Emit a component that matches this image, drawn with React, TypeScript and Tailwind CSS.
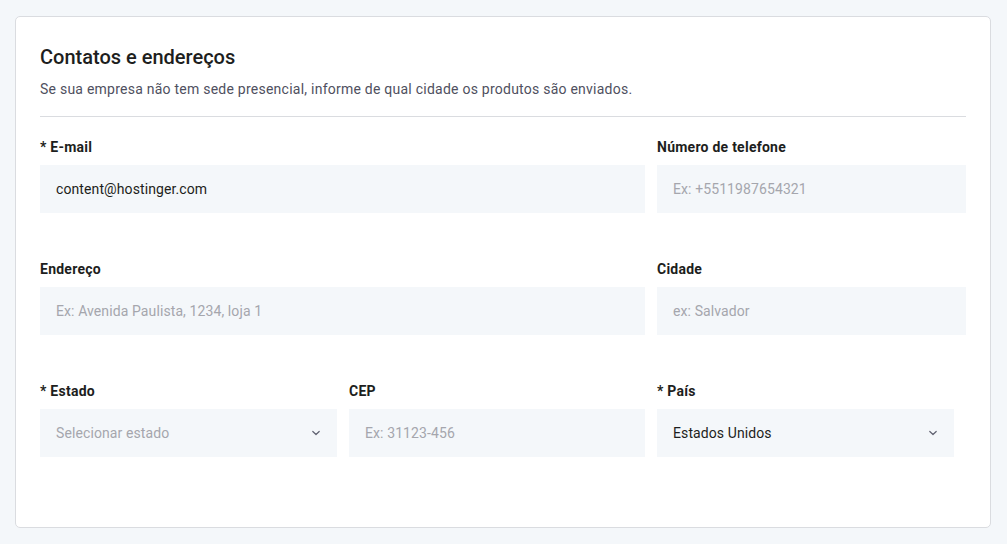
import React from "react";

function Chevron() {
  return (
    <svg width="10" height="10" viewBox="0 0 10 10" fill="none" className="shrink-0">
      <path d="M1.8 3.5 L5 6.5 L8.2 3.5" stroke="#5f6170" strokeWidth="1.2" strokeLinecap="round" strokeLinejoin="round" />
    </svg>
  );
}

function Field({
  label,
  value,
  placeholder,
  width,
  select,
}: {
  label: string;
  value?: string;
  placeholder?: string;
  width: string;
  select?: boolean;
}) {
  return (
    <div className={`flex flex-col ${width}`}>
      <div className="text-[14px] leading-5 font-bold text-[#1d1e20] tracking-[0.25px]">{label}</div>
      <div className="mt-2 h-12 bg-[#f4f7fa] flex items-center justify-between pl-4 pr-[16px]">
        <span className={`text-[14px] tracking-[0.1px] ${value ? "text-[#1d1e20]" : "text-[#a5a6ad]"}`}>
          {value ?? placeholder}
        </span>
        {select && <Chevron />}
      </div>
    </div>
  );
}

export default function App() {
  return (
    <div className="w-[1007px] h-[544px] bg-[#f4f7fa] pt-4 pl-[15px] font-['Roboto',sans-serif]">
      <div className="w-[976px] h-[512px] bg-white border border-[#dadce0] rounded-[5px] px-6 pt-[26px]">
        <h2 className="text-[20px] leading-7 font-medium text-[#1d1e20]">Contatos e endereços</h2>
        <p className="mt-[8px] text-[14px] leading-5 text-[#4f5060] tracking-[0.24px]">
          Se sua empresa não tem sede presencial, informe de qual cidade os produtos são enviados.
        </p>
        <div className="mt-[17px] h-px bg-[#dadce0]" />
        <div className="mt-5 flex flex-col gap-[46px]">
          <div className="flex gap-3">
            <Field label="* E-mail" value="content@hostinger.com" width="w-[605px]" />
            <Field label="Número de telefone" placeholder="Ex: +5511987654321" width="w-[309px]" />
          </div>
          <div className="flex gap-3">
            <Field label="Endereço" placeholder="Ex: Avenida Paulista, 1234, loja 1" width="w-[605px]" />
            <Field label="Cidade" placeholder="ex: Salvador" width="w-[309px]" />
          </div>
          <div className="flex gap-3">
            <Field label="* Estado" placeholder="Selecionar estado" width="w-[297px]" select />
            <Field label="CEP" placeholder="Ex: 31123-456" width="w-[296px]" />
            <Field label="* País" value="Estados Unidos" width="w-[297px]" select />
          </div>
        </div>
      </div>
    </div>
  );
}
